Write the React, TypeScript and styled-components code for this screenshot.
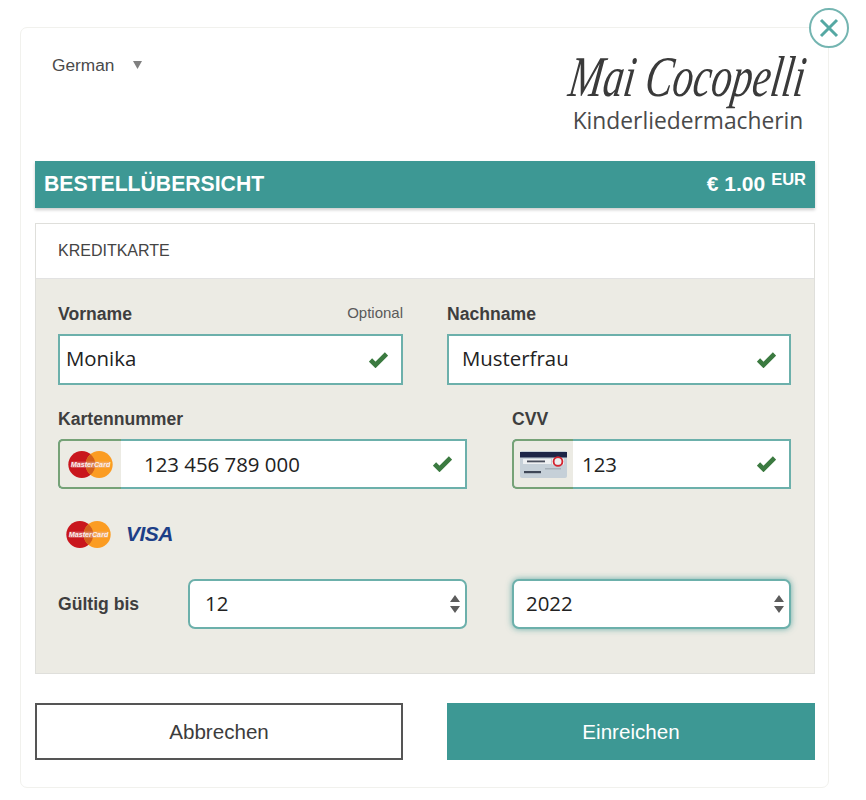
import React from "react";
import styled, { createGlobalStyle } from "styled-components";

const Global = createGlobalStyle`
  html, body { margin: 0; padding: 0; background: #fff; }
  body { font-family: "Liberation Sans", Arial, sans-serif; color: #333; }
`;

const Page = styled.div`
  width: 866px;
  height: 800px;
  padding: 27px 37px 12px 20px;
  box-sizing: border-box;
`;

const Card = styled.div`
  position: relative;
  width: 809px;
  height: 761px;
  box-sizing: border-box;
  padding: 0 13px 0 14px;
  background: #fff;
  border: 1px solid #f1f1ed;
  border-radius: 7px;
`;

const Close = styled.button`
  position: absolute;
  top: -20px;
  right: -21px;
  width: 40px;
  height: 40px;
  padding: 0;
  border: 2px solid #74b5b1;
  border-radius: 50%;
  background: #fff;
  display: flex;
  align-items: center;
  justify-content: center;
`;

const Header = styled.header`
  height: 133px;
  display: flex;
  justify-content: space-between;
`;

const Language = styled.div`
  margin: 27px 0 0 17px;
  display: flex;
  align-items: center;
  gap: 19px;
  height: 20px;
  font-size: 17.3px;
  color: #4a4a4a;
`;

const Logo = styled.div`
  width: 236px;
  margin: 17px 9px 0 0;
  display: flex;
  flex-direction: column;
  align-items: center;
`;

const LogoScript = styled.div`
  font-family: "Liberation Serif", serif;
  font-style: italic;
  font-size: 50px;
  line-height: 62px;
  height: 62px;
  color: #3a3a3a;
  white-space: nowrap;
  transform: skewX(-8deg) scale(0.82, 1.15);
`;

const LogoSub = styled.div`
  font-family: "Open Sans", sans-serif;
  font-size: 22.8px;
  line-height: 28px;
  color: #4a4a4a;
  white-space: nowrap;
`;

const SummaryBar = styled.div`
  height: 47px;
  box-sizing: border-box;
  padding: 0 9px;
  background: #3d9894;
  box-shadow: 0 2px 3px rgba(0, 0, 0, 0.2);
  color: #fff;
  font-weight: 700;
  display: flex;
  align-items: center;
  justify-content: space-between;
`;

const SummaryTitle = styled.div`
  font-size: 21.2px;
  margin-top: -2px;
`;

const Price = styled.div`
  font-size: 21px;
  display: flex;
  align-items: flex-start;
  gap: 6px;
  margin-top: -1px;
`;

const Currency = styled.span`
  font-size: 16.5px;
  margin-top: -2px;
`;

const Panel = styled.section`
  margin-top: 15px;
  height: 451px;
  box-sizing: border-box;
  background: #ecebe4;
  border: 1px solid #dfdfdb;
`;

const PanelHead = styled.div`
  height: 55px;
  box-sizing: border-box;
  padding-left: 22px;
  background: #fff;
  border-bottom: 1px solid #e2e2e2;
  display: flex;
  align-items: center;
  font-size: 16px;
  color: #444;
`;

const Form = styled.div`
  padding: 23px 23px 0 22px;
  display: flex;
  flex-direction: column;
`;

const Row = styled.div<{ $gap: number; $mb?: number }>`
  display: flex;
  gap: ${(p) => p.$gap}px;
  margin-bottom: ${(p) => p.$mb ?? 0}px;
`;

const Field = styled.div<{ $w: number }>`
  width: ${(p) => p.$w}px;
  flex: none;
`;

const LabelRow = styled.div`
  height: 25px;
  padding-top: 1px;
  display: flex;
  justify-content: space-between;
  align-items: flex-start;
  margin-bottom: 6px;
`;

const Label = styled.label`
  font-size: 17.6px;
  line-height: 22px;
  font-weight: 700;
  color: #3e3e3e;
`;

const Optional = styled.span`
  font-size: 15px;
  line-height: 20px;
  color: #5a5a5a;
`;

const InputBox = styled.div<{ $pb?: number }>`
  position: relative;
  height: 51px;
  box-sizing: border-box;
  padding-bottom: ${(p) => p.$pb ?? 0}px;
  border: 2px solid #6cb0ab;
  background: #fff;
  display: flex;
  align-items: center;
`;

const AddonBox = styled(InputBox)`
  height: 50px;
  border-radius: 5px 0 0 5px;
`;

const Addon = styled.div<{ $w: number }>`
  width: ${(p) => p.$w}px;
  height: 50px;
  margin: -2px 0 -2px -2px;
  box-sizing: border-box;
  flex: none;
  background: #ecebe4;
  border: 2px solid #76a277;
  border-right: 0;
  border-radius: 5px 0 0 5px;
  display: flex;
  align-items: center;
  justify-content: center;
`;

const TextInput = styled.input<{ $pl: number }>`
  flex: 1;
  min-width: 0;
  height: 100%;
  box-sizing: border-box;
  padding: 0 40px 0 ${(p) => p.$pl}px;
  border: 0;
  outline: 0;
  background: transparent;
  font-family: "Open Sans", sans-serif;
  font-size: 20.4px;
  color: #222;
`;

const Valid = styled.svg`
  position: absolute;
  right: 13px;
  top: 50%;
  transform: translateY(-50%);
`;

const Brands = styled.div`
  height: 50px;
  margin: 20px 0 20px 8px;
  display: flex;
  align-items: center;
  gap: 15px;
`;

const ExpiryRow = styled.div`
  display: flex;
  align-items: center;
`;

const ExpiryLabel = styled(Label)`
  width: 130px;
  flex: none;
`;

const SelectBox = styled.div<{ $focus?: boolean }>`
  position: relative;
  height: 50px;
  width: 279px;
  box-sizing: border-box;
  border: 2px solid #6cb0ab;
  border-radius: 7px;
  background: #fff;
  flex: none;
  margin-left: ${(p) => (p.$focus ? 45 : 0)}px;
  box-shadow: ${(p) => (p.$focus ? "0 0 6px rgba(61,152,148,.75)" : "none")};
`;

const Select = styled.select<{ $pl: number }>`
  width: 100%;
  height: 100%;
  padding: 0 30px 2px ${(p) => p.$pl}px;
  border: 0;
  outline: 0;
  background: transparent;
  appearance: none;
  font-family: "Open Sans", sans-serif;
  font-size: 20.4px;
  color: #222;
`;

const Spinner = styled.svg`
  position: absolute;
  right: 5px;
  top: 14px;
  pointer-events: none;
`;

const Actions = styled.div`
  margin-top: 29px;
  display: flex;
  justify-content: space-between;
`;

const CancelButton = styled.button`
  width: 368px;
  height: 57px;
  background: #fff;
  border: 2px solid #555;
  font-family: "Liberation Sans", sans-serif;
  font-size: 20.6px;
  color: #3c3c3c;
`;

const SubmitButton = styled.button`
  width: 368px;
  height: 57px;
  background: #3d9894;
  border: 0;
  font-family: "Liberation Sans", sans-serif;
  font-size: 20.6px;
  color: #fff;
`;

const VisaMark = styled.span`
  font-family: "Liberation Sans", sans-serif;
  font-style: italic;
  font-weight: 700;
  font-size: 21px;
  letter-spacing: -0.5px;
  color: #1d3f87;
`;

const MasterCard = () => (
  <svg width="45" height="27" viewBox="0 0 46 28">
    <circle cx="14" cy="14" r="14" fill="#c9161d" />
    <circle cx="32" cy="14" r="14" fill="#fb9c22" />
    <path d="M23 3.3a14 14 0 0 1 0 21.4a14 14 0 0 1 0-21.4z" fill="#d3601c" />
    <rect x="3" y="11" width="40" height="6.5" fill="#e9c4c0" opacity="0.35" />
    <text x="23" y="16.5" textAnchor="middle" fontFamily="Liberation Sans" fontStyle="italic" fontWeight="700" fontSize="7.5" fill="#fbeeee">
      MasterCard
    </text>
  </svg>
);

const CvvCard = () => (
  <svg width="47" height="27" viewBox="0 0 47 27">
    <rect width="47" height="27" rx="2" fill="#c6d0d8" />
    <rect y="1" width="47" height="5.5" fill="#1d2547" />
    <rect x="3" y="8" width="28" height="5" fill="#eef0f2" />
    <rect x="7" y="9.5" width="18" height="1.8" fill="#4a4f5c" />
    <rect x="32" y="7.5" width="12" height="6" fill="#eee" />
    <circle cx="38" cy="10.5" r="4.4" fill="none" stroke="#d5232f" strokeWidth="1.8" />
    <rect x="4" y="20" width="17" height="2.2" fill="#3f4757" />
    <rect x="25" y="17" width="16" height="1.5" fill="#a7b1ba" />
  </svg>
);

const CheckIcon = () => (
  <Valid width="19" height="16" viewBox="0 0 19 16" fill="none" stroke="#3b7a40" strokeWidth="4.6">
    <path d="M1.5 8l5 5L17.5 2" />
  </Valid>
);

const SpinnerIcon = () => (
  <Spinner width="10" height="18" viewBox="0 0 10 18">
    <path d="M5 0l5 7H0zM0 11h10l-5 7z" fill="#5c5c5c" />
  </Spinner>
);

export default function App() {
  return (
    <>
      <Global />
      <Page>
        <Card>
          <Close aria-label="Schließen">
            <svg width="24" height="24" viewBox="0 0 24 24" fill="none" stroke="#55a8a3" strokeWidth="3">
              <path d="M4 4l16 16M20 4L4 20" />
            </svg>
          </Close>
          <Header>
            <Language>
              German
              <svg width="9" height="8" viewBox="0 0 9 8">
                <path d="M0 0h9L4.5 8z" fill="#808080" />
              </svg>
            </Language>
            <Logo>
              <LogoScript>Mai Cocopelli</LogoScript>
              <LogoSub>Kinderliedermacherin</LogoSub>
            </Logo>
          </Header>
          <SummaryBar>
            <SummaryTitle>BESTELLÜBERSICHT</SummaryTitle>
            <Price>
              € 1.00 <Currency>EUR</Currency>
            </Price>
          </SummaryBar>
          <Panel>
            <PanelHead>KREDITKARTE</PanelHead>
            <Form>
              <Row $gap={44} $mb={22}>
                <Field $w={345}>
                  <LabelRow>
                    <Label>Vorname</Label>
                    <Optional>Optional</Optional>
                  </LabelRow>
                  <InputBox $pb={3}>
                    <TextInput $pl={6} defaultValue="Monika" />
                    <CheckIcon />
                  </InputBox>
                </Field>
                <Field $w={344}>
                  <LabelRow>
                    <Label>Nachname</Label>
                  </LabelRow>
                  <InputBox $pb={3}>
                    <TextInput $pl={13} defaultValue="Musterfrau" />
                    <CheckIcon />
                  </InputBox>
                </Field>
              </Row>
              <Row $gap={45}>
                <Field $w={409}>
                  <LabelRow>
                    <Label>Kartennummer</Label>
                  </LabelRow>
                  <AddonBox>
                    <Addon $w={63}><MasterCard /></Addon>
                    <TextInput $pl={23} defaultValue="123 456 789 000" />
                    <CheckIcon />
                  </AddonBox>
                </Field>
                <Field $w={279}>
                  <LabelRow>
                    <Label>CVV</Label>
                  </LabelRow>
                  <AddonBox>
                    <Addon $w={61}><CvvCard /></Addon>
                    <TextInput $pl={9} defaultValue="123" />
                    <CheckIcon />
                  </AddonBox>
                </Field>
              </Row>
              <Brands>
                <MasterCard />
                <VisaMark>VISA</VisaMark>
              </Brands>
              <ExpiryRow>
                <ExpiryLabel>Gültig bis</ExpiryLabel>
                <SelectBox>
                  <Select $pl={15} defaultValue="12">
                    <option>12</option>
                  </Select>
                  <SpinnerIcon />
                </SelectBox>
                <SelectBox $focus>
                  <Select $pl={12} defaultValue="2022">
                    <option>2022</option>
                  </Select>
                  <SpinnerIcon />
                </SelectBox>
              </ExpiryRow>
            </Form>
          </Panel>
          <Actions>
            <CancelButton>Abbrechen</CancelButton>
            <SubmitButton>Einreichen</SubmitButton>
          </Actions>
        </Card>
      </Page>
    </>
  );
}
